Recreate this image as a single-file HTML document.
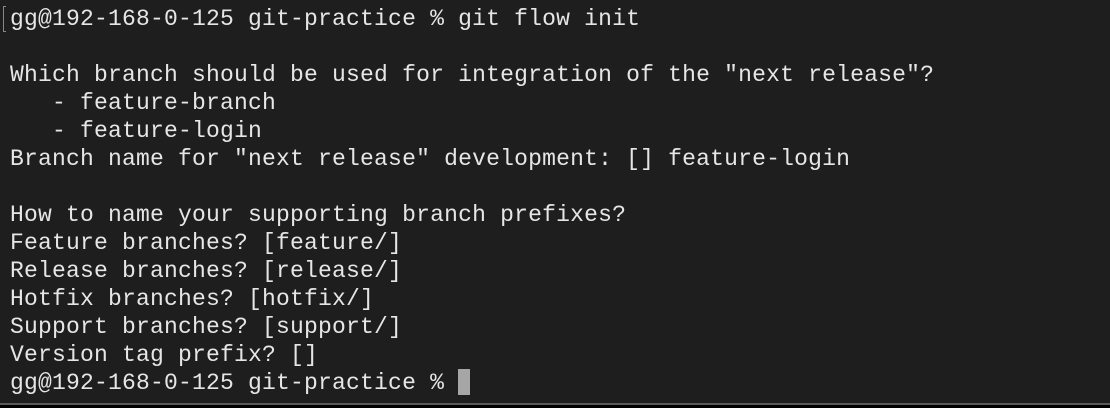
<!DOCTYPE html>
<html><head><style>
html,body{margin:0;padding:0;}
body{width:1110px;height:408px;background:#1e1e1e;overflow:hidden;position:relative;}
pre{position:absolute;left:10px;top:5px;margin:0;font-family:"Liberation Mono",monospace;font-size:23px;line-height:28px;color:#e6e6e6;letter-spacing:0.2px;}
.cur{display:inline-block;width:12px;height:26px;background:#a6a6a6;vertical-align:-6px;}
.br{position:absolute;left:3px;top:6px;width:2px;height:24px;border-left:1px solid #888;border-top:1px solid #888;border-bottom:1px solid #888;}
.bot{position:absolute;left:0;top:403px;width:1110px;height:2px;background:#5a5a5a;}
.blk{position:absolute;left:0;top:405px;width:1110px;height:3px;background:#000;}
</style></head><body>
<div class="br"></div>
<pre>gg@192-168-0-125 git-practice % git flow init

Which branch should be used for integration of the "next release"?
   - feature-branch
   - feature-login
Branch name for "next release" development: [] feature-login

How to name your supporting branch prefixes?
Feature branches? [feature/]
Release branches? [release/]
Hotfix branches? [hotfix/]
Support branches? [support/]
Version tag prefix? []
gg@192-168-0-125 git-practice % <span class="cur"></span></pre>
<div class="bot"></div><div class="blk"></div>
</body></html>
